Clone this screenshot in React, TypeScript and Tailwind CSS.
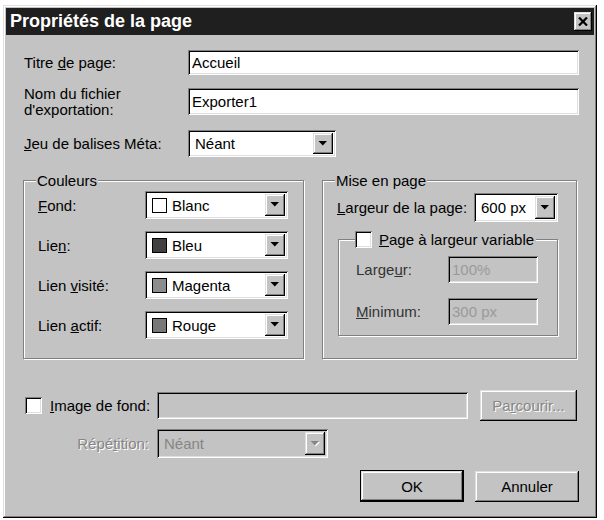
import React from 'react'

const raised =
  'shadow-[inset_-1px_-1px_0_#000,inset_1px_1px_0_#dfdfdf,inset_-2px_-2px_0_#808080,inset_2px_2px_0_#fff]'
const sunken =
  'shadow-[inset_1px_1px_0_#808080,inset_-1px_-1px_0_#fff,inset_2px_2px_0_#000,inset_-2px_-2px_0_#dfdfdf]'
const etched = 'text-[#868686] [text-shadow:1px_1px_0_#fff]'

function Arrow({ disabled }: { disabled?: boolean }) {
  return (
    <svg width="10" height="6" viewBox="0 0 10 6">
      {disabled && <polygon points="1.5,1 10,1 5.8,5.5" fill="#fff" />}
      <polygon points="0.5,0 9,0 4.8,4.5" fill={disabled ? '#868686' : '#000'} />
    </svg>
  )
}

function Select({
  value,
  swatch,
  disabled,
  className,
}: {
  value: string
  swatch?: string
  disabled?: boolean
  className: string
}) {
  return (
    <div
      className={`flex items-stretch p-[3px] ${sunken} ${disabled ? 'bg-[#c3c3c3]' : 'bg-white'} ${className}`}
    >
      <div className="flex flex-1 items-center gap-[5px] pl-[4px]">
        {swatch && <span className={`w-[15px] h-[15px] border border-black ${swatch}`} />}
        <span className={disabled ? 'text-[#868686]' : ''}>{value}</span>
      </div>
      <div className={`w-[20px] bg-[#c3c3c3] flex items-center justify-center ${raised}`}>
        <Arrow disabled={disabled} />
      </div>
    </div>
  )
}

function Input({
  value,
  disabled,
  className,
}: {
  value?: string
  disabled?: boolean
  className: string
}) {
  return (
    <div
      className={`flex items-center px-[4px] ${sunken} ${disabled ? 'bg-[#c3c3c3] text-[#9a9a9a]' : 'bg-white'} ${className}`}
    >
      {value}
    </div>
  )
}

function Checkbox() {
  return <span className={`inline-block w-[17px] h-[17px] bg-white ${sunken}`} />
}

function Button({
  children,
  isDefault,
  disabled,
  className,
}: {
  children: React.ReactNode
  isDefault?: boolean
  disabled?: boolean
  className: string
}) {
  return (
    <div className={`${isDefault ? 'border border-black' : ''} ${className}`}>
      <div
        className={`h-full flex items-center justify-center bg-[#c3c3c3] ${raised} ${disabled ? etched : ''}`}
      >
        {children}
      </div>
    </div>
  )
}

export default function App() {
  return (
    <div
      className="w-[604px] h-[520px] bg-white pl-[3px] pt-[5px] text-[15px] text-black leading-[17px]"
      style={{ fontFamily: '"Liberation Sans", Arial, sans-serif' }}
    >
      <div className={`w-[594px] h-[513px] bg-[#c3c3c3] p-[3px] ${raised}`}>
        {/* Title bar */}
        <div className="h-[27px] bg-[#1f1f1f] flex items-center justify-between pl-[4px] pr-[2px]">
          <span className="text-white font-bold text-[18px]">Propriétés de la page</span>
          <div className={`w-[18px] h-[19px] bg-[#c3c3c3] flex items-center justify-center ${raised}`}>
            <svg width="10" height="9" viewBox="0 0 10 9">
              <path d="M1 0.5 L9 8.5 M9 0.5 L1 8.5" stroke="#000" strokeWidth="2.2" />
            </svg>
          </div>
        </div>

        <div className="flex flex-col pl-[17px] pr-[15px] pt-[15px]">
          <div className="flex items-center">
            <label className="w-[165px] pl-[1px]">
              Titre <u>d</u>e page:
            </label>
            <Input value="Accueil" className="flex-1 h-[25px]" />
          </div>

          <div className="flex items-center h-[27px] mt-[13px]">
            <label className="w-[165px] pl-[1px] leading-[16px]">
              Nom du fichier
              <br />
              d'exportation:
            </label>
            <Input value="Exporter1" className="flex-1 h-[27px]" />
          </div>

          <div className="flex items-center mt-[15px]">
            <label className="w-[165px] pl-[1px]">
              <u>J</u>eu de balises Méta:
            </label>
            <Select value="Néant" className="w-[148px] h-[27px]" />
          </div>

          {/* Group boxes */}
          <div className="flex gap-[18px] mt-[15px]">
            <fieldset className="w-[281px] h-[187px] border border-[#808080] shadow-[1px_1px_0_#fff,inset_1px_1px_0_#fff] pl-[12px] pr-[15px]">
              <legend className="px-[1px] bg-[#c3c3c3]">Couleurs</legend>
              <div className="flex flex-col gap-[12px] pt-[2px]">
                {[
                  { label: <><u>F</u>ond:</>, value: 'Blanc', swatch: 'bg-white' },
                  { label: <>Lie<u>n</u>:</>, value: 'Bleu', swatch: 'bg-[#404040]' },
                  { label: <>Lien <u>v</u>isité:</>, value: 'Magenta', swatch: 'bg-[#8c8c8c]' },
                  { label: <>Lien <u>a</u>ctif:</>, value: 'Rouge', swatch: 'bg-[#777777]' },
                ].map((row) => (
                  <div key={row.value} className="flex items-center">
                    <label className="w-[109px] pl-[2px]">{row.label}</label>
                    <Select value={row.value} swatch={row.swatch} className="w-[143px] h-[28px]" />
                  </div>
                ))}
              </div>
            </fieldset>

            <fieldset className="w-[255px] h-[187px] border border-[#808080] shadow-[1px_1px_0_#fff,inset_1px_1px_0_#fff] pl-[12px] pr-[17px]">
              <legend className="px-[1px] bg-[#c3c3c3]">Mise en page</legend>
              <div className="flex items-center pt-[4px]">
                <label className="w-[139px] pl-[2px]">
                  <u>L</u>argeur de la page:
                </label>
                <Select value="600 px" className="w-[84px] h-[29px]" />
              </div>
              <fieldset className="mt-[9px] ml-[3px] w-[220px] border border-[#808080] shadow-[1px_1px_0_#fff,inset_1px_1px_0_#fff] pl-[16px] pb-[10px]">
                <legend className="flex items-center gap-[7px] pr-[2px] bg-[#c3c3c3]">
                  <Checkbox />
                  <span>
                    <u>P</u>age à largeur variable
                  </span>
                </legend>
                <div className="flex flex-col gap-[15px] pt-[8px]">
                  <div className="flex items-center">
                    <label className="w-[93px] pl-[1px] text-[#333]">
                      Large<u>u</u>r:
                    </label>
                    <Input value="100%" disabled className="w-[90px] h-[27px]" />
                  </div>
                  <div className="flex items-center">
                    <label className="w-[93px] pl-[1px] text-[#333]">
                      <u>M</u>inimum:
                    </label>
                    <Input value="300 px" disabled className="w-[90px] h-[27px]" />
                  </div>
                </div>
              </fieldset>
            </fieldset>
          </div>

          {/* Background image */}
          <div className="flex items-center mt-[31px] h-[31px]">
            <div className="w-[134px] flex items-center pl-[2px] gap-[8px]">
              <Checkbox />
              <label>
                <u>I</u>mage de fond:
              </label>
            </div>
            <Input disabled className="w-[311px] h-[27px]" />
            <Button disabled className="ml-[12px] w-[97px] h-[31px]">
              Pa<u>r</u>courir...
            </Button>
          </div>

          <div className="flex items-center mt-[8px]">
            <label className={`w-[134px] pr-[8px] text-right ${etched}`}>
              Répé<u>t</u>ition:
            </label>
            <Select value="Néant" disabled className="w-[171px] h-[29px]" />
          </div>

          {/* Buttons */}
          <div className="flex justify-end items-center gap-[11px] mt-[12px]">
            <Button isDefault className="w-[104px] h-[32px]">
              OK
            </Button>
            <Button className="w-[104px] h-[31px]">Annuler</Button>
          </div>
        </div>
      </div>
    </div>
  )
}
